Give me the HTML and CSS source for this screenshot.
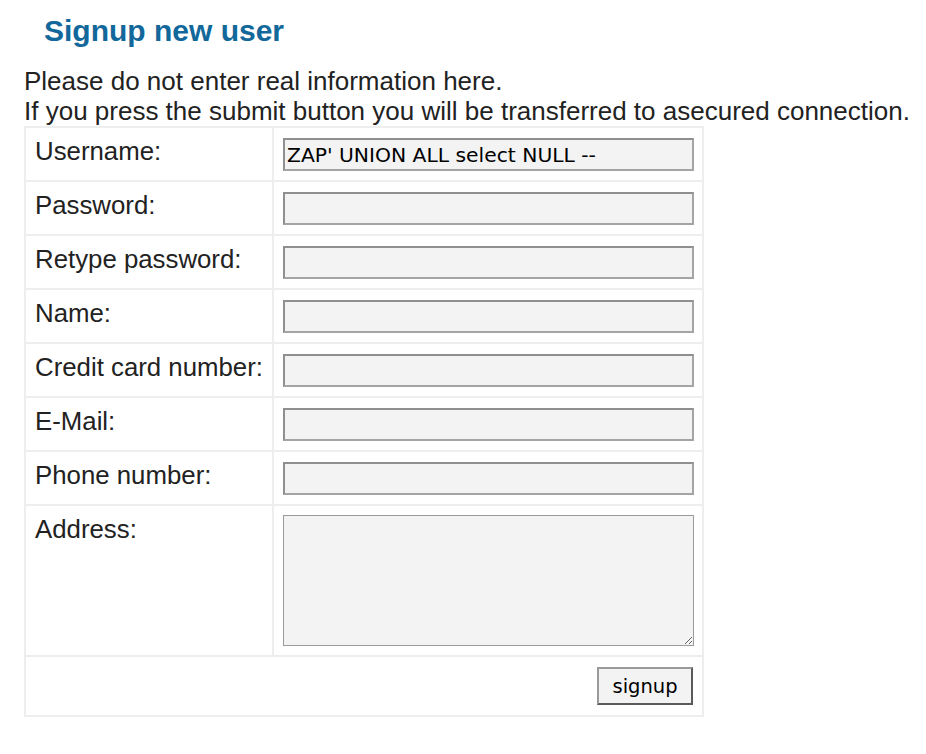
FILE: index.html
```html
<!DOCTYPE html>
<html>
<head>
<meta charset="utf-8">
<title>Signup new user</title>
<link rel="stylesheet" href="styles.css">
</head>
<body>
<div class="page">
  <h1 class="title">Signup new user</h1>
  <p class="note">Please do not enter real information here.<br>If you press the submit button you will be transferred to asecured connection.</p>
  <form class="signup">
    <table class="form-table">
      <tr>
        <td class="label">Username:</td>
        <td class="field"><input class="text" type="text" value="ZAP' UNION ALL select NULL --"></td>
      </tr>
      <tr>
        <td class="label">Password:</td>
        <td class="field"><input class="text" type="password"></td>
      </tr>
      <tr>
        <td class="label">Retype password:</td>
        <td class="field"><input class="text" type="password"></td>
      </tr>
      <tr>
        <td class="label">Name:</td>
        <td class="field"><input class="text" type="text"></td>
      </tr>
      <tr>
        <td class="label">Credit card number:</td>
        <td class="field"><input class="text" type="text"></td>
      </tr>
      <tr>
        <td class="label">E-Mail:</td>
        <td class="field"><input class="text" type="text"></td>
      </tr>
      <tr>
        <td class="label">Phone number:</td>
        <td class="field"><input class="text" type="text"></td>
      </tr>
      <tr>
        <td class="label">Address:</td>
        <td class="field"><textarea class="area"></textarea></td>
      </tr>
      <tr>
        <td class="actions" colspan="2"><button class="btn" type="button">signup</button></td>
      </tr>
    </table>
  </form>
</div>
</body>
</html>
```

FILE: styles.css
```css
html, body {
  margin: 0;
  padding: 0;
  background: #ffffff;
}

.page {
  padding: 14px 0 0 24px;
  font-family: "Liberation Sans", Arial, sans-serif;
  color: #222222;
}

.title {
  margin: 0 0 18px 20px;
  font-size: 30px;
  line-height: 34px;
  font-weight: bold;
  color: #12689a;
}

.note {
  margin: 0;
  font-size: 26px;
  line-height: 30px;
  white-space: nowrap;
}

.signup {
  margin: 0;
}

.form-table {
  table-layout: fixed;
  width: 680px;
  border-collapse: separate;
  border-spacing: 0;
  border-top: 2px solid #eeeeee;
  border-left: 2px solid #eeeeee;
}

.form-table td {
  box-sizing: border-box;
  border-right: 2px solid #eeeeee;
  border-bottom: 2px solid #eeeeee;
  vertical-align: top;
  padding: 8px 9px 9px 9px;
}

.label {
  width: 248px;
  font-size: 25.8px;
  line-height: 30px;
  white-space: nowrap;
  color: #222222;
}

.field {
  width: 430px;
}

.text {
  display: block;
  box-sizing: border-box;
  width: 411px;
  height: 33px;
  margin: 2px 0 0 0;
  padding: 0 2px;
  border-style: solid;
  border-width: 2px;
  border-color: #8f8f8f #a4a4a4 #a4a4a4 #8f8f8f;
  background: #f3f3f3;
  font-family: "DejaVu Sans", Verdana, sans-serif;
  font-size: 20.3px;
  color: #000000;
  outline: none;
}

.area {
  display: block;
  box-sizing: border-box;
  width: 411px;
  height: 131px;
  margin: 1px 0 0 0;
  padding: 2px;
  border: 1px solid #9a9a9a;
  background: #f3f3f3;
  font-family: "DejaVu Sans", Verdana, sans-serif;
  font-size: 16px;
}

.actions {
  text-align: right;
  padding: 10px 9px 10px 9px !important;
}

.btn {
  box-sizing: border-box;
  width: 96px;
  height: 38px;
  margin: 0;
  padding: 0;
  border-style: solid;
  border-width: 2px;
  border-color: #9a9a9a #5a5a5a #5a5a5a #9a9a9a;
  background: #f3f3f3;
  font-family: "DejaVu Sans", Verdana, sans-serif;
  font-size: 19.5px;
  color: #000000;
  vertical-align: top;
}
```
